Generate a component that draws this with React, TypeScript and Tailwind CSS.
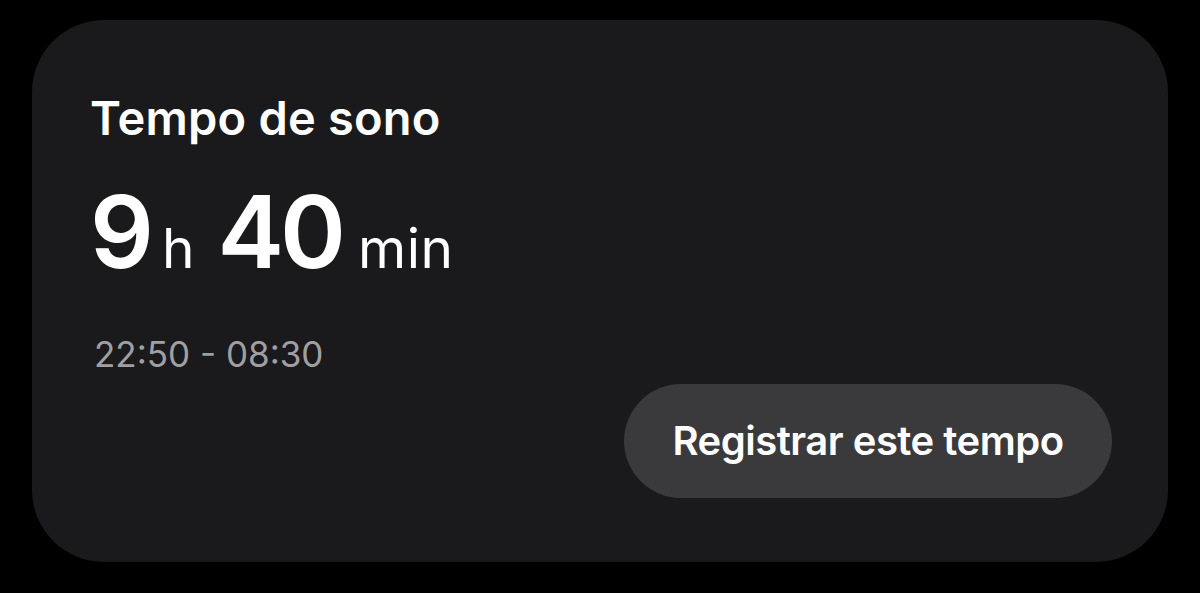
export default function App() {
  return (
    <div className="min-h-screen bg-black px-8 pt-5 font-['Inter',sans-serif]">
      {/* Sleep time card */}
      <div className="flex h-[542px] w-[1136px] flex-col rounded-[72px] bg-[#1a1a1c] pl-[58px] pr-[56px] pt-[70px] pb-[64px]">
        <h2 className="text-[47px] leading-[56px] font-semibold text-white tracking-[0.2px]">Tempo de sono</h2>
        <div className="mt-[36px] flex items-baseline text-white">
          <span className="text-[100px] leading-[100px] font-semibold tracking-[-2px]">9</span>
          <span className="ml-[10px] text-[55px] font-normal">h</span>
          <span className="ml-[23px] text-[100px] leading-[100px] font-semibold tracking-[-4px]">40</span>
          <span className="ml-[16px] text-[55px] font-normal tracking-[0.5px]">min</span>
        </div>
        <div className="mt-[44px] text-[35px] leading-[40px] text-[#a0a0a2] pl-[4px]">22:50 - 08:30</div>
        <div className="mt-auto flex justify-end">
          <button className="h-[114px] w-[488px] rounded-full bg-[#3a3a3c] text-[40px] font-semibold text-white tracking-[-0.5px]">
            Registrar este tempo
          </button>
        </div>
      </div>
    </div>
  );
}
